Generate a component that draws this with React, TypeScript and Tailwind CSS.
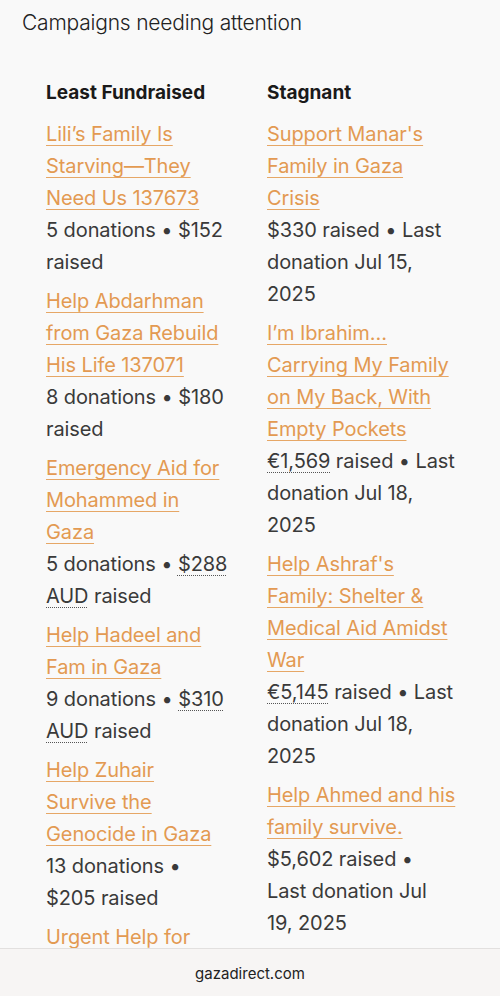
const leastFundraised = [
  { title: "Lili’s Family Is Starving—They Need Us 137673", count: 5, amount: "$152", abbr: false },
  { title: "Help Abdarhman from Gaza Rebuild His Life 137071", count: 8, amount: "$180", abbr: false },
  { title: "Emergency Aid for Mohammed in Gaza", count: 5, amount: "$288 AUD", abbr: true },
  { title: "Help Hadeel and Fam in Gaza", count: 9, amount: "$310 AUD", abbr: true },
  { title: "Help Zuhair Survive the Genocide in Gaza", count: 13, amount: "$205", abbr: false },
  { title: "Urgent Help for Ahmad and His Family", count: 4, amount: "$120", abbr: false },
];

const stagnant = [
  { title: "Support Manar's Family in Gaza Crisis", amount: "$330", abbr: false, date: "Jul 15, 2025" },
  { title: "I’m Ibrahim… Carrying My Family on My Back, With Empty Pockets", amount: "€1,569", abbr: true, date: "Jul 18, 2025" },
  { title: "Help Ashraf's Family: Shelter & Medical Aid Amidst War", amount: "€5,145", abbr: true, date: "Jul 18, 2025" },
  { title: "Help Ahmed and his family survive.", amount: "$5,602", abbr: false, date: "Jul 19, 2025" },
];

function Amount({ value, abbr }: { value: string; abbr: boolean }) {
  if (!abbr) return <>{value}</>;
  return (
    <abbr className="underline decoration-dotted decoration-1 underline-offset-[4px] decoration-[#555]">
      {value}
    </abbr>
  );
}

function CampaignLink({ title }: { title: string }) {
  return (
    <a
      href="#"
      className="text-[#e39a52] underline decoration-1 underline-offset-[4px] decoration-[#e6a766]"
    >
      {title}
    </a>
  );
}

export default function App() {
  return (
    <div
      className="flex h-[996px] flex-col overflow-hidden bg-[#f9f9f9] text-[#3a3a3a]"
      style={{ fontFamily: "Inter, 'Noto Sans', sans-serif" }}
    >
      <main className="flex-1 overflow-hidden">
        <h2 className="pl-[22px] pt-[9px] text-[21px] leading-[28px] font-light tracking-[-0.2px] text-[#222]">
          Campaigns needing attention
        </h2>
        <div className="mt-[42px] grid grid-cols-[182px_190px] gap-x-[39px] pl-[46px]">
          <section>
            <h3 className="text-[19px] leading-[28px] font-bold text-[#1a1a1a]">Least Fundraised</h3>
            <ul className="mt-[11px] flex flex-col gap-[7px] text-[20px] leading-[32px] tracking-[-0.1px]">
              {leastFundraised.map((c) => (
                <li key={c.title}>
                  <CampaignLink title={c.title} />
                  <div>
                    {c.count} donations • <Amount value={c.amount} abbr={c.abbr} /> raised
                  </div>
                </li>
              ))}
            </ul>
          </section>
          <section>
            <h3 className="text-[19px] leading-[28px] font-bold text-[#1a1a1a]">Stagnant</h3>
            <ul className="mt-[11px] flex flex-col gap-[7px] text-[20px] leading-[32px] tracking-[-0.1px]">
              {stagnant.map((c) => (
                <li key={c.title}>
                  <CampaignLink title={c.title} />
                  <div>
                    <Amount value={c.amount} abbr={c.abbr} /> raised • Last donation {c.date}
                  </div>
                </li>
              ))}
            </ul>
          </section>
        </div>
      </main>
      <footer className="flex h-[48px] shrink-0 items-center justify-center border-t border-[#e2e0df] bg-[#f7f5f4] pt-[3px] text-[15px] text-[#222]">
        gazadirect.com
      </footer>
    </div>
  );
}
